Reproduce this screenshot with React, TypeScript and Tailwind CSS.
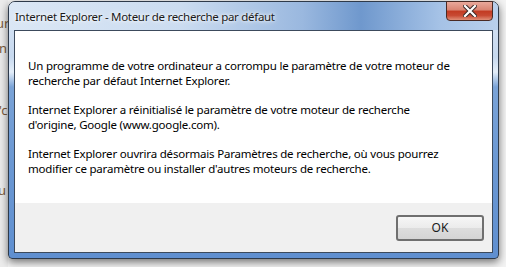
import React from "react";

export default function App() {
  const font = { fontFamily: '"Segoe UI", "Noto Sans", "Open Sans", sans-serif' };
  return (
    <div className="relative w-[506px] h-[267px] overflow-hidden bg-[#f4f4f4]" style={font}>
      {/* page behind */}
      <div className="absolute left-0 top-0 w-[8px] h-[267px] bg-[#ececec]" />
      <span className="absolute left-[-4px] top-[14px] text-[13px] text-[#7a5a3a]">ur</span>
      <span className="absolute left-[-1px] top-[39px] text-[13px] text-[#7a5a3a]">n</span>
      <span className="absolute left-[-1px] top-[101px] text-[13px] text-[#7a5a3a]">'c</span>
      <span className="absolute left-[-2px] top-[181px] text-[13px] text-[#7a5a3a]">u</span>

      {/* window */}
      <div className="absolute left-[8px] top-[1px] w-[491px] h-[258px] rounded-t-[7px] rounded-b-[4px] border border-[#2e3a4a] shadow-[0_3px_8px_rgba(0,0,0,0.55)] bg-[linear-gradient(180deg,#d9e6f5_0px,#c7d9ef_55px,#e4eef9_70px,#7aa3d7_85px,#6b98d3_160px,#5f8fd0_258px)] flex flex-col">
        {/* title bar */}
        <div className="relative h-[28px] shrink-0 flex items-start rounded-t-[6px] bg-[linear-gradient(90deg,#dbe7f5_0%,#cbdcf0_35%,#9ab8df_60%,#6f98cd_72%,#a5c2e6_88%,#b9d0ec_100%)]">
          <span className="pl-[6px] pt-[7px] whitespace-nowrap text-[11.5px] tracking-[-0.3px] leading-[15px] text-[#1a1a1a] [text-shadow:0_0_6px_#fff,0_0_3px_#fff]">
            Internet Explorer - Moteur de recherche par défaut
          </span>
          <div className="absolute right-[5px] top-[-1px] w-[47px] h-[20px] rounded-b-[4px] border border-[#4a2a24] bg-[linear-gradient(180deg,#e9a99b_0%,#d98472_45%,#c23a22_50%,#c84a33_75%,#e08f78_100%)] flex items-center justify-center">
            <svg width="14" height="12" viewBox="0 0 14 12">
              <path d="M2 1 L12 11 M12 1 L2 11" stroke="#3a2a28" strokeWidth="4.2" strokeLinecap="square" />
              <path d="M2 1 L12 11 M12 1 L2 11" stroke="#ffffff" strokeWidth="2.2" strokeLinecap="square" />
            </svg>
          </div>
        </div>
        {/* client */}
        <div className="flex-1 mx-[5px] mb-[5px] border border-[#3c4a5c] flex flex-col bg-white">
          <div className="flex-1 bg-white pl-[13px] pr-[4px] pt-[27px] whitespace-nowrap text-[11.5px] tracking-[-0.2px] leading-[15px] text-[#000000] flex flex-col gap-[14px]">
            <p>
              Un programme de votre ordinateur a corrompu le paramètre de votre moteur de
              <br />
              recherche par défaut Internet Explorer.
            </p>
            <p>
              Internet Explorer a réinitialisé le paramètre de votre moteur de recherche
              <br />
              d'origine, Google (www.google.com).
            </p>
            <p>
              Internet Explorer ouvrira désormais Paramètres de recherche, où vous pourrez
              <br />
              modifier ce paramètre ou installer d'autres moteurs de recherche.
            </p>
          </div>
          <div className="h-[49px] shrink-0 bg-[#f0f0f0] flex items-start justify-end pt-[12px] pr-[8px]">
            <button className="w-[88px] h-[26px] rounded-[3px] border-2 border-[#6f6f6f] bg-[linear-gradient(180deg,#f6f6f6_0%,#ebebeb_50%,#dddddd_51%,#d4d4d4_100%)] text-[12px] text-[#1a1a1a] flex items-center justify-center">
              OK
            </button>
          </div>
        </div>
      </div>
    </div>
  );
}
